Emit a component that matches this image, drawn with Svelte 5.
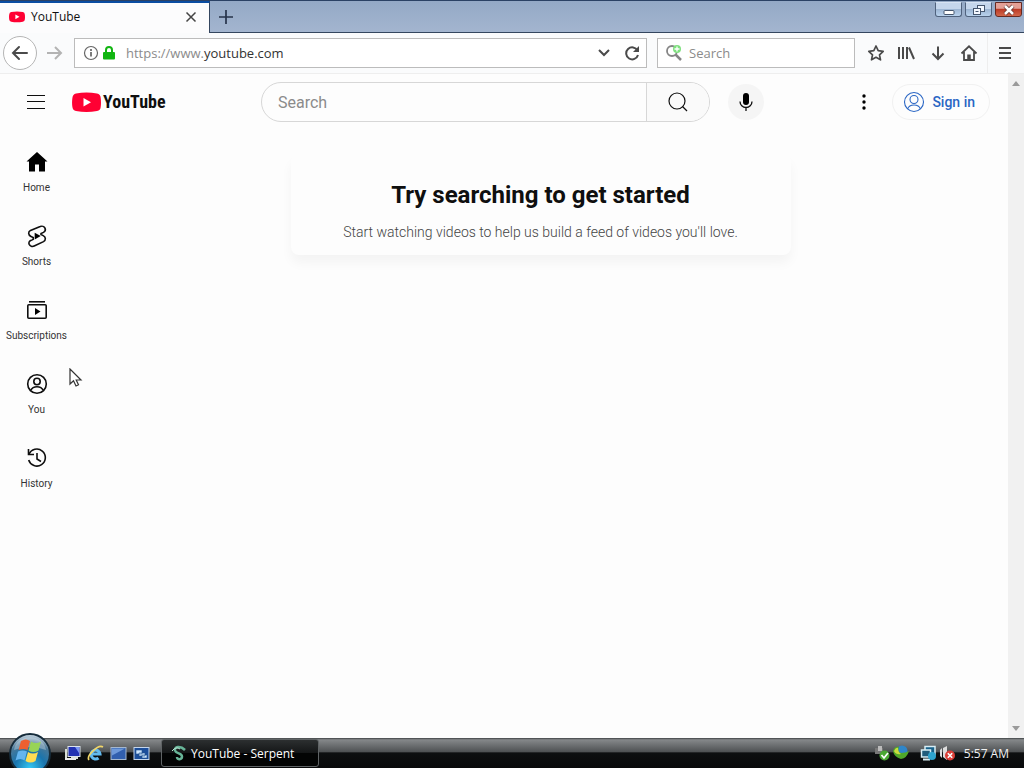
<script lang="ts">
  let address = $state('');
  let webSearch = $state('');
  let query = $state('');

  const guide = [
    { id: 'home', label: 'Home' },
    { id: 'shorts', label: 'Shorts' },
    { id: 'subscriptions', label: 'Subscriptions' },
    { id: 'you', label: 'You' },
    { id: 'history', label: 'History' }
  ];
</script>

{#snippet playBadge()}
  <path d="M4 1.5Q14.5 -.5 25 1.5Q28.5 2 28.7 6Q29.3 10.5 28.7 15Q28.5 18.5 25 19Q14.5 21 4 19Q.8 18.5 .4 15Q-.3 10.5 .4 6Q.8 2 4 1.5Z" fill="#ff0033" />
  <path d="M11.5 6v8.500l7.500-4.250z" fill="#fff" />
{/snippet}

<div class="desktop">
  <div class="tabstrip">
    <div class="tab">
      <svg class="favicon" viewBox="0 0 29 21" width="16" height="12">{@render playBadge()}</svg>
      <span class="tab-title">YouTube</span>
      <button class="plain" aria-label="Close tab">
        <svg width="12" height="12" viewBox="0 0 12 12"><path d="M1.5 1.5l9 9M10.5 1.5l-9 9" stroke="#444" stroke-width="1.5" /></svg>
      </button>
    </div>
    <button class="plain new-tab" aria-label="New tab">
      <svg width="14" height="14" viewBox="0 0 14 14"><path d="M7 0v14M0 7h14" stroke="#26334a" stroke-width="1.7" /></svg>
    </button>
    <div class="window-buttons">
      <button class="caption" aria-label="Minimize">
        <svg width="26" height="14" viewBox="0 0 26 14"><rect x="8" y="7.5" width="10" height="4" rx="1" fill="#fff" stroke="#46566e" /></svg>
      </button>
      <button class="caption" aria-label="Restore">
        <svg width="26" height="14" viewBox="0 0 26 14" fill="#f4f8ff" stroke="#46566e"><rect x="11.5" y="2.5" width="7" height="6" /><rect x="7.5" y="5.5" width="7" height="6" /><path d="M9.500 8.500h3" /></svg>
      </button>
      <button class="caption close" aria-label="Close">
        <svg width="26" height="14" viewBox="0 0 26 14"><path d="M9 3l8 8M17 3l-8 8" stroke="#64342f" stroke-width="4" /><path d="M9 3l8 8M17 3l-8 8" stroke="#fff" stroke-width="2.5" /></svg>
      </button>
    </div>
  </div>

  <div class="toolbar">
    <button class="plain back" aria-label="Back">
      <svg width="18" height="16" viewBox="0 0 18 16" fill="none" stroke="#4a4a4a" stroke-width="2" stroke-linecap="round"><path d="M16 8H2M8 2L2 8l6 6" /></svg>
    </button>
    <button class="plain forward" aria-label="Forward">
      <svg width="18" height="16" viewBox="0 0 18 16" fill="none" stroke="#b3b3b3" stroke-width="2"><path d="M0 8h14M8 2l6 6-6 6" /></svg>
    </button>
    <div class="field address">
      <svg width="16" height="16" viewBox="0 0 16 16" fill="none" stroke="#666"><circle cx="8" cy="8" r="6.5" stroke-width="1.2" /><path d="M8 7v4.500M8 4v2" stroke-width="1.7" /></svg>
      <svg width="14" height="16" viewBox="0 0 14 16"><path d="M4 8V5a3 3 0 0 1 6 0v3" fill="none" stroke="#12b512" stroke-width="2" /><rect x="1" y="7" width="12" height="7.5" rx="1" fill="#12b512" /></svg>
      <label class="url">
        <span>https://www.<b>youtube.com</b></span>
        <input aria-label="Address" bind:value={address} />
      </label>
      <button class="plain" aria-label="Show history">
        <svg width="14" height="10" viewBox="0 0 14 10" fill="none" stroke="#4a4a4a" stroke-width="2"><path d="M2 2l5 5 5-5" /></svg>
      </button>
      <button class="plain" aria-label="Reload">
        <svg width="16" height="16" viewBox="0 0 16 16" fill="none" stroke="#4a4a4a" stroke-width="2"><path d="M13.500 5.500A6 6 0 1 0 14 10" /><path d="M15 1v6H9z" fill="#4a4a4a" stroke="none" /></svg>
      </button>
    </div>
    <div class="field web-search">
      <svg width="18" height="18" viewBox="0 0 18 18" fill="none"><circle cx="7" cy="7" r="5" stroke="#858585" stroke-width="1.8" /><path d="M10.5 10.5l5.500 5.500" stroke="#858585" stroke-width="2.5" /><circle cx="12" cy="5" r="4" fill="#7fe07f" /><path d="M12 2.500v5M9.500 5h5" stroke="#fff" stroke-width="1.3" /></svg>
      <input aria-label="Web search" placeholder="Search" bind:value={webSearch} />
    </div>
    <div class="tools">
      <button class="plain" aria-label="Bookmark">
        <svg width="18" height="18" viewBox="0 0 18 18" fill="none" stroke="#4a4a4a" stroke-width="1.7" stroke-linejoin="round"><path d="M9 2l2.200 4.700 5 .6-3.700 3.500 1 5L9 13.300l-4.500 2.500 1-5L1.800 7.300l5-.6z" /></svg>
      </button>
      <button class="plain" aria-label="Library">
        <svg width="18" height="18" viewBox="0 0 18 18" stroke="#4a4a4a" stroke-width="2"><path d="M1 3v12M5 3v12M9 3v12M11 3.500l5 11.500" fill="none" /></svg>
      </button>
      <button class="plain" aria-label="Downloads">
        <svg width="18" height="18" viewBox="0 0 18 18" fill="none" stroke="#4a4a4a" stroke-width="2"><path d="M9 2.500V15M3.500 9.500L9 15l5.500-5.500" /></svg>
      </button>
      <button class="plain" aria-label="Home page">
        <svg width="18" height="18" viewBox="0 0 18 18" fill="none" stroke="#4a4a4a" stroke-width="1.8"><path d="M1.500 9.500L9 2.300l7.500 7.200M4 8v8h10V8" /><path d="M9 16v-5.500" stroke-width="3.5" /></svg>
      </button>
      <button class="plain app-menu" aria-label="Open menu">
        <svg width="14" height="14" viewBox="0 0 14 14" stroke="#4a4a4a" stroke-width="2"><path d="M1 2h12M1 7h12M1 12h12" /></svg>
      </button>
    </div>
  </div>

  <div class="viewport">
    <div class="page">
      <header>
        <div class="start">
          <button class="plain" aria-label="Guide">
            <svg width="24" height="24" viewBox="0 0 24 24"><path d="M3 5.500h18M3 11.500h18M3 18.500h18" stroke="#0f0f0f" /></svg>
          </button>
          <a class="logo" href="/" aria-label="YouTube Home">
            <svg width="29" height="21" viewBox="0 0 29 21">{@render playBadge()}</svg>
            <span>YouTube</span>
          </a>
        </div>
        <div class="center">
          <form class="searchbox" role="search">
            <input aria-label="Search" placeholder="Search" bind:value={query} />
            <button type="button" class="plain" aria-label="Submit search">
              <svg width="24" height="24" viewBox="0 0 24 24" fill="none" stroke="#0f0f0f" stroke-width="1.2"><circle cx="11" cy="11" r="8" /><path d="M16.500 16.500L21 21" /></svg>
            </button>
          </form>
          <button class="plain mic" aria-label="Search with your voice">
            <svg width="24" height="24" viewBox="0 0 24 24"><rect x="9" y="3" width="6" height="12" rx="3" /><path d="M6 11.500a6 6 0 0 0 12 0M12 17.500V21" fill="none" stroke="#0f0f0f" stroke-width="1.3" /></svg>
          </button>
        </div>
        <div class="end">
          <button class="plain" aria-label="Settings">
            <svg width="24" height="24" viewBox="0 0 24 24"><circle cx="12" cy="6" r="1.7" /><circle cx="12" cy="12" r="1.7" /><circle cx="12" cy="18" r="1.7" /></svg>
          </button>
          <a class="sign-in" href="/signin">
            <svg width="22" height="22" viewBox="0 0 22 22" fill="none" stroke="#2a66c4" stroke-width="1.1"><circle cx="11" cy="11" r="9.5" /><circle cx="11" cy="8.5" r="4" /><path d="M4.500 18q1.500-4 6.500-4t6.500 4" /></svg>
            Sign in
          </a>
        </div>
      </header>

      <div class="body">
        <nav>
          {#each guide as item (item.id)}
            <a href="/{item.id}">
              <svg width="24" height="24" viewBox="0 0 24 24" fill="none" stroke="#0f0f0f" stroke-width="1.6">
                {#if item.id === 'home'}
                  <path d="M12 2L1.500 11.500H4V21.500h6v-7h4v7h6V11.500h2.500z" fill="#000" stroke="none" />
                {:else if item.id === 'shorts'}
                  <path d="M7.200 15.900L8.200 15.300V13.400L6 12.400C3 11 3 7.800 5.500 6.400L15.200 2.500C17 1.700 19.200 2.500 20 4.200C20.800 6 20 7.600 18.500 8.400L16 9.600V10.600L18.200 11.600C21 13 21 16.200 18.500 17.600L9.200 22C7.200 22.900 5 22 4.200 20.400C3.400 18.600 4.300 17.100 5.700 16.500Z" />
                  <path d="M9.700 8.800v6.600l6-3.300z" fill="#000" stroke="none" />
                {:else if item.id === 'subscriptions'}
                  <path d="M4 3.800h16" /><rect x="2.8" y="6.8" width="18.4" height="13.4" rx="1" /><path d="M10 10v7l5.500-3.500z" fill="#000" stroke="none" />
                {:else if item.id === 'you'}
                  <circle cx="12" cy="12" r="9.3" /><circle cx="12" cy="9.5" r="3.2" /><path d="M5.500 18.500q2-3.800 6.500-3.800t6.500 3.800" />
                {:else}
                  <path d="M3.500 3v5.500H9" /><path d="M4 8.300A8.500 8.500 0 1 1 3.700 14" /><path d="M12 7V13l4 2.500" />
                {/if}
              </svg>
              <span>{item.label}</span>
            </a>
          {/each}
        </nav>
        <main>
          <section class="nudge">
            <h1>Try searching to get started</h1>
            <p>Start watching videos to help us build a feed of videos you'll love.</p>
          </section>
        </main>
      </div>
    </div>
    <div class="scrollbar">
      <button class="plain" aria-label="Scroll up"><svg width="8" height="5" viewBox="0 0 8 5"><path d="M0 5l4-5 4 5z" fill="#9a9a9a" /></svg></button>
      <button class="plain" aria-label="Scroll down"><svg width="8" height="5" viewBox="0 0 8 5"><path d="M0 0l4 5 4-5z" fill="#9a9a9a" /></svg></button>
    </div>
  </div>

  <div class="taskbar">
    <button class="plain orb" aria-label="Start">
      <svg width="42" height="42" viewBox="0 0 42 42">
        <defs>
          <radialGradient id="glass" cx=".5" cy=".85" r=".85">
            <stop offset="0" stop-color="#35c8f4" />
            <stop offset=".45" stop-color="#1a74ad" />
            <stop offset=".75" stop-color="#4a7898" />
            <stop offset="1" stop-color="#d4dfe8" />
          </radialGradient>
        </defs>
        <circle cx="21" cy="21" r="20" fill="url(#glass)" stroke="#162c3b" stroke-width="2" />
        <path d="M5 17C7 0 35 0 37 17Q21 11 5 17" fill="#fff" opacity=".3" />
        <path d="M12 8q5-3 9 0l-2.500 9q-4-2-9 0z" fill="#ee6030" />
        <path d="M22 8.500q5 3 10 0l-2.500 9q-5 3-10 0z" fill="#98d456" />
        <path d="M9 18.500q5-2 9 0l-2.500 9q-4-3-9 0z" fill="#65b5ef" />
        <path d="M19 19q5 3 10 0l-2.500 9q-5 3-10 0z" fill="#ffdc52" />
      </svg>
    </button>
    <div class="quick">
      <button class="plain" aria-label="Display">
        <svg width="17" height="17" viewBox="0 0 17 17"><rect x="4" y="1.5" width="12" height="10" fill="#2231b2" stroke="#dce3ec" /><path d="M11 2h4v6z" fill="#7996f2" /><path d="M1 4h2v9H1zM7 12h7v2H7z" fill="#d9ded6" /><path d="M1 14h11" stroke="#eaeaea" stroke-width="2" /></svg>
      </button>
      <button class="plain" aria-label="Internet Explorer">
        <svg width="17" height="17" viewBox="0 0 17 17" fill="none"><path d="M4 9h9a4.500 4.500 0 1 0-1.500 4" stroke="#62baf0" stroke-width="3" /><path d="M2 15C-1 11 11-1 16 2" stroke="#f1d669" stroke-width="1.7" /></svg>
      </button>
      <button class="plain" aria-label="Show desktop">
        <svg width="17" height="17" viewBox="0 0 17 17"><rect x="1" y="2.5" width="15" height="12" fill="#315fae" stroke="#a5b8cf" /><path d="M2 3.500h13l-13 7z" fill="#6e99d9" /></svg>
      </button>
      <button class="plain" aria-label="Switch windows">
        <svg width="17" height="17" viewBox="0 0 17 17"><rect x="1" y="2.5" width="15" height="12" fill="#1c4e9b" stroke="#c4d6ed" /><path d="M3 5h6v4H3zM6 8h6v3H6zM9 10h5v3H9z" fill="#cde5ff" stroke="#23508e" stroke-width=".6" /></svg>
      </button>
    </div>
    <button class="task">
      <svg width="16" height="16" viewBox="0 0 16 16" fill="none"><path d="M14 5C9 0 3 2 4 5.500S11 8 11 11.500 6 15 6 12" stroke="#68b598" stroke-width="2.5" /><path d="M1 6q4-5 8-2" stroke="#b9e5d4" /></svg>
      YouTube - Serpent
    </button>
    <div class="tray">
      <svg width="16" height="16" viewBox="0 0 16 16"><path d="M1 3h8v6H1z" fill="#777" /><path d="M4 1h4v5H4z" fill="#bbb" /><circle cx="10.5" cy="10.5" r="5" fill="#4aa832" /><path d="M7.500 10l2.500 3 4-5" fill="none" stroke="#fff" stroke-width="1.7" /></svg>
      <svg class="world" width="18" height="16" viewBox="0 0 18 16"><circle cx="10" cy="6" r="5.5" fill="#2f86c9" /><path d="M1 6q2-5 6-4-2 4 2 6 5 0 8-2-2 7-8 8Q2 12 1 6" fill="#4fa82a" /><path d="M2 6q2-4 4-3 0 4 3 6-5 1-7-3" fill="#c9dc3e" /></svg>
      <svg width="17" height="16" viewBox="0 0 17 16"><rect x="5" y="1.5" width="10" height="8" fill="#17618a" stroke="#d8eef5" stroke-width="1.5" /><rect x="1.5" y="5" width="9" height="7" fill="#205c7b" stroke="#d8eef5" stroke-width="1.5" /><path d="M3 14.500h7" stroke="#d8eef5" stroke-width="2" /><circle cx="12" cy="11" r="4" fill="#2fa5cf" /></svg>
      <svg width="17" height="16" viewBox="0 0 17 16"><path d="M1 5l2-2v10l-2-2zM4 3l4-2v14l-4-3z" fill="#ddd" /><circle cx="11" cy="10.5" r="5" fill="#dc3f38" /><path d="M8.800 8.300l4.400 4.400M13.200 8.300l-4.400 4.400" stroke="#fff" stroke-width="1.6" /></svg>
      <span class="clock">5:57 AM</span>
    </div>
  </div>

  <svg class="pointer" width="14" height="20" viewBox="0 0 14 20"><path d="M1 1v15l3.500-3.300L7 18l2.500-1.200L7.200 12H12z" fill="#fff" stroke="#333" stroke-width="1.2" /></svg>
</div>

<style>
  :global(body) {
    overflow: hidden;
    background: #fdfdfd;
  }

  .desktop,
  .desktop * {
    box-sizing: border-box;
  }

  .desktop {
    position: relative;
    display: flex;
    flex-direction: column;
    min-height: 100vh;
    font-family: "Open Sans", "Noto Sans", sans-serif;
    font-size: 12px;
    color: #0f0f0f;
  }

  svg {
    display: block;
    flex: none;
  }

  a {
    color: inherit;
    text-decoration: none;
  }

  input {
    min-width: 0;
    padding: 0;
    border: 0;
    background: none;
    font: inherit;
    outline: none;
  }

  .plain {
    display: flex;
    align-items: center;
    justify-content: center;
    flex: none;
    padding: 0;
    border: 0;
    background: none;
  }

  .tabstrip {
    display: flex;
    height: 33px;
    background: linear-gradient(#94a9c6, #a3b5cf);
    border-top: 1px solid #2b4265;
    border-bottom: 1px solid #34465f;
  }

  .tab {
    display: flex;
    align-items: center;
    gap: 6px;
    width: 210px;
    height: 33px;
    padding: 0 12px 4px 9px;
    background: #fcfcfd;
    border-top: 2px solid #0a4da2;
    border-right: 1px solid #34465f;
  }

  .tab-title {
    flex: 1;
  }

  .new-tab {
    width: 32px;
  }

  .window-buttons {
    display: flex;
    gap: 3px;
    margin-left: auto;
    padding: 1px 2px 0 0;
  }

  .caption {
    display: flex;
    justify-content: center;
    align-items: center;
    width: 27px;
    height: 15px;
    padding: 0;
    border: 1px solid #50627d;
    border-top-color: #d7e3f3;
    border-radius: 0 0 3px 3px;
    background: linear-gradient(#c5d6ec 45%, #9db6d4 50%, #b9d2ed);
  }

  .close {
    background: linear-gradient(#e4a096 40%, #bc3c27 50%, #d2674b);
    border-color: #672920;
  }

  .toolbar {
    display: flex;
    align-items: center;
    height: 41px;
    padding: 0 12px 0 3px;
    background: #fafbfc;
    border-bottom: 1px solid #eeeeee;
  }

  .back {
    width: 34px;
    height: 34px;
    border: 1px solid #b5b5b5;
    border-radius: 50%;
    background: #fff;
  }

  .forward {
    width: 37px;
  }

  .field {
    display: flex;
    align-items: center;
    height: 30px;
    border: 1px solid #bcbcbc;
    background: #fff;
    font-size: 13px;
  }

  .address {
    flex: 1;
    gap: 3px;
    padding: 0 2px 0 8px;
  }

  .address button {
    width: 25px;
  }

  .url {
    display: flex;
    flex: 1;
    margin-left: 7px;
    color: #8b8b8b;
  }

  .url b {
    font-weight: 400;
    color: #333;
  }

  .url input {
    flex: 1;
  }

  .web-search {
    flex: none;
    gap: 6px;
    width: 198px;
    margin-left: 10px;
    padding: 0 7px;
  }

  .web-search input {
    flex: 1;
  }

  .web-search input::placeholder {
    color: #8b8b8b;
    opacity: 1;
  }

  .tools {
    display: flex;
    align-items: center;
    gap: 13px;
    margin-left: 12px;
  }

  .app-menu {
    height: 40px;
    padding-left: 10px;
    margin-left: -4px;
    border-left: 1px solid #eeeeee;
  }

  .viewport {
    display: flex;
    flex: 1;
  }

  .page {
    flex: 1;
    font-family: Roboto, sans-serif;
    background: #fdfdfd;
  }

  .scrollbar {
    display: flex;
    flex-direction: column;
    justify-content: space-between;
    width: 16px;
    padding: 7px 0;
    background: #f1f1f1;
  }

  header {
    display: flex;
    align-items: center;
    height: 56px;
    padding: 0 18px 0 24px;
  }

  .start {
    display: flex;
    align-items: center;
    gap: 24px;
    flex: 0 0 237px;
  }

  .logo {
    display: flex;
    align-items: center;
    gap: 2px;
    font-family: "Roboto Condensed", "Liberation Sans Narrow", Roboto, sans-serif;
    font-size: 18px;
    font-weight: 700;
    line-height: 24px;
  }

  .center {
    display: flex;
    flex: 1;
    gap: 18px;
  }

  .searchbox {
    display: flex;
    flex: 1;
    height: 40px;
    border: 1px solid #d7d7d7;
    border-radius: 20px;
    overflow: hidden;
  }

  .searchbox input {
    flex: 1;
    padding-left: 16px;
    font-size: 16px;
  }

  .searchbox input::placeholder {
    color: #8b8b8b;
    opacity: 1;
  }

  .searchbox button {
    width: 63px;
    border-left: 1px solid #d7d7d7;
    background: #fafafa;
  }

  .mic {
    width: 36px;
    height: 36px;
    margin: 2px 0;
    border-radius: 50%;
    background: #f5f5f5;
  }

  .end {
    display: flex;
    align-items: center;
    justify-content: flex-end;
    gap: 16px;
    flex: 0 0 226px;
  }

  .sign-in {
    display: flex;
    align-items: center;
    gap: 7px;
    height: 36px;
    padding: 0 14px 0 10px;
    border: 1px solid #f1f1f1;
    border-radius: 18px;
    font-size: 14px;
    font-weight: 500;
    color: #2a66c4;
  }

  .body {
    display: flex;
  }

  nav {
    width: 73px;
    padding-top: 4px;
  }

  nav a {
    display: flex;
    flex-direction: column;
    align-items: center;
    gap: 7px;
    height: 74px;
    padding-top: 16px;
    font-size: 10px;
    line-height: 14px;
    color: #333;
  }

  main {
    flex: 1;
    padding: 24px;
  }

  .nudge {
    max-width: 500px;
    margin: 0 auto;
    padding: 25px 24px 13px;
    border-radius: 8px;
    background: #fdfdfd;
    box-shadow: 0 8px 12px rgba(0, 0, 0, 0.04);
    text-align: center;
  }

  h1 {
    margin: 0 0 11px;
    font-size: 24px;
    font-weight: 700;
    line-height: 32px;
  }

  p {
    margin: 0;
    font-size: 14px;
    font-weight: 300;
    line-height: 20px;
    color: #444;
  }

  .taskbar {
    display: flex;
    align-items: center;
    height: 30px;
    padding-left: 9px;
    background: linear-gradient(#3d4143, #85888a 6%, #505355 45%, #0d0f10 50%, #08090a);
    color: #f0f0f0;
  }

  .orb {
    height: 35px;
    align-items: flex-start;
    overflow: hidden;
    align-self: flex-end;
  }

  .quick {
    display: flex;
    gap: 6px;
    margin-left: 13px;
  }

  .task {
    display: flex;
    align-items: center;
    gap: 4px;
    width: 158px;
    height: 28px;
    margin-left: 11px;
    padding: 0 9px;
    border: 1px solid #5f6365;
    border-radius: 3px;
    background: linear-gradient(#2c2f30, #151718 48%, #030404 50%);
    color: #fff;
    font: inherit;
    white-space: nowrap;
  }

  .tray {
    display: flex;
    align-items: center;
    gap: 2px;
    margin-left: auto;
    padding-right: 15px;
  }

  .world {
    margin-right: 8px;
  }

  .clock {
    margin-left: 6px;
  }

  .pointer {
    position: absolute;
    left: 69px;
    top: 368px;
  }
</style>
